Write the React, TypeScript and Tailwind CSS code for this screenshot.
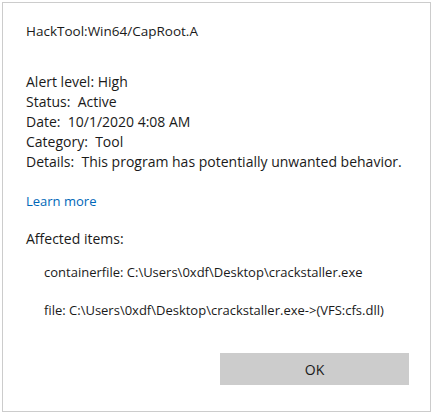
export default function App() {
    const font = { fontFamily: '"Open Sans", "Noto Sans", sans-serif' };
    return (
        <div className="w-[435px] h-[414px] bg-white pt-[2px] pl-[2px]" style={font}>
            <div className="w-[429px] h-[410px] border border-[#cccccc] flex flex-col pl-[23px] text-[#1a1a1a]">
                <div className="mt-[18px] text-[13.5px] leading-[20px]">HackTool:Win64/CapRoot.A</div>

                <div className="mt-[31px] text-[14px] leading-[20px]">
                    <div>Alert level: High</div>
                    <div>Status:&nbsp; Active</div>
                    <div>Date:&nbsp; 10/1/2020 4:08 AM</div>
                    <div>Category:&nbsp; Tool</div>
                    <div>Details:&nbsp; This program has potentially unwanted behavior.</div>
                </div>

                <div className="mt-[19px] text-[13px] leading-[20px] text-[#0067b8]">Learn more</div>

                <div className="mt-[18px] text-[14px] leading-[20px]">Affected items:</div>

                <div className="pl-[18px] text-[13px] leading-[18px]">
                    <div className="mt-[14px]">containerfile: C:\Users\0xdf\Desktop\crackstaller.exe</div>
                    <div className="mt-[20px]">file: C:\Users\0xdf\Desktop\crackstaller.exe-&gt;(VFS:cfs.dll)</div>
                </div>

                <div className="mt-[34px] flex justify-end pr-[21px]">
                    <div className="w-[189px] h-[32px] bg-[#cccccc] flex items-center justify-center text-[14px]">OK</div>
                </div>
            </div>
        </div>
    );
}
